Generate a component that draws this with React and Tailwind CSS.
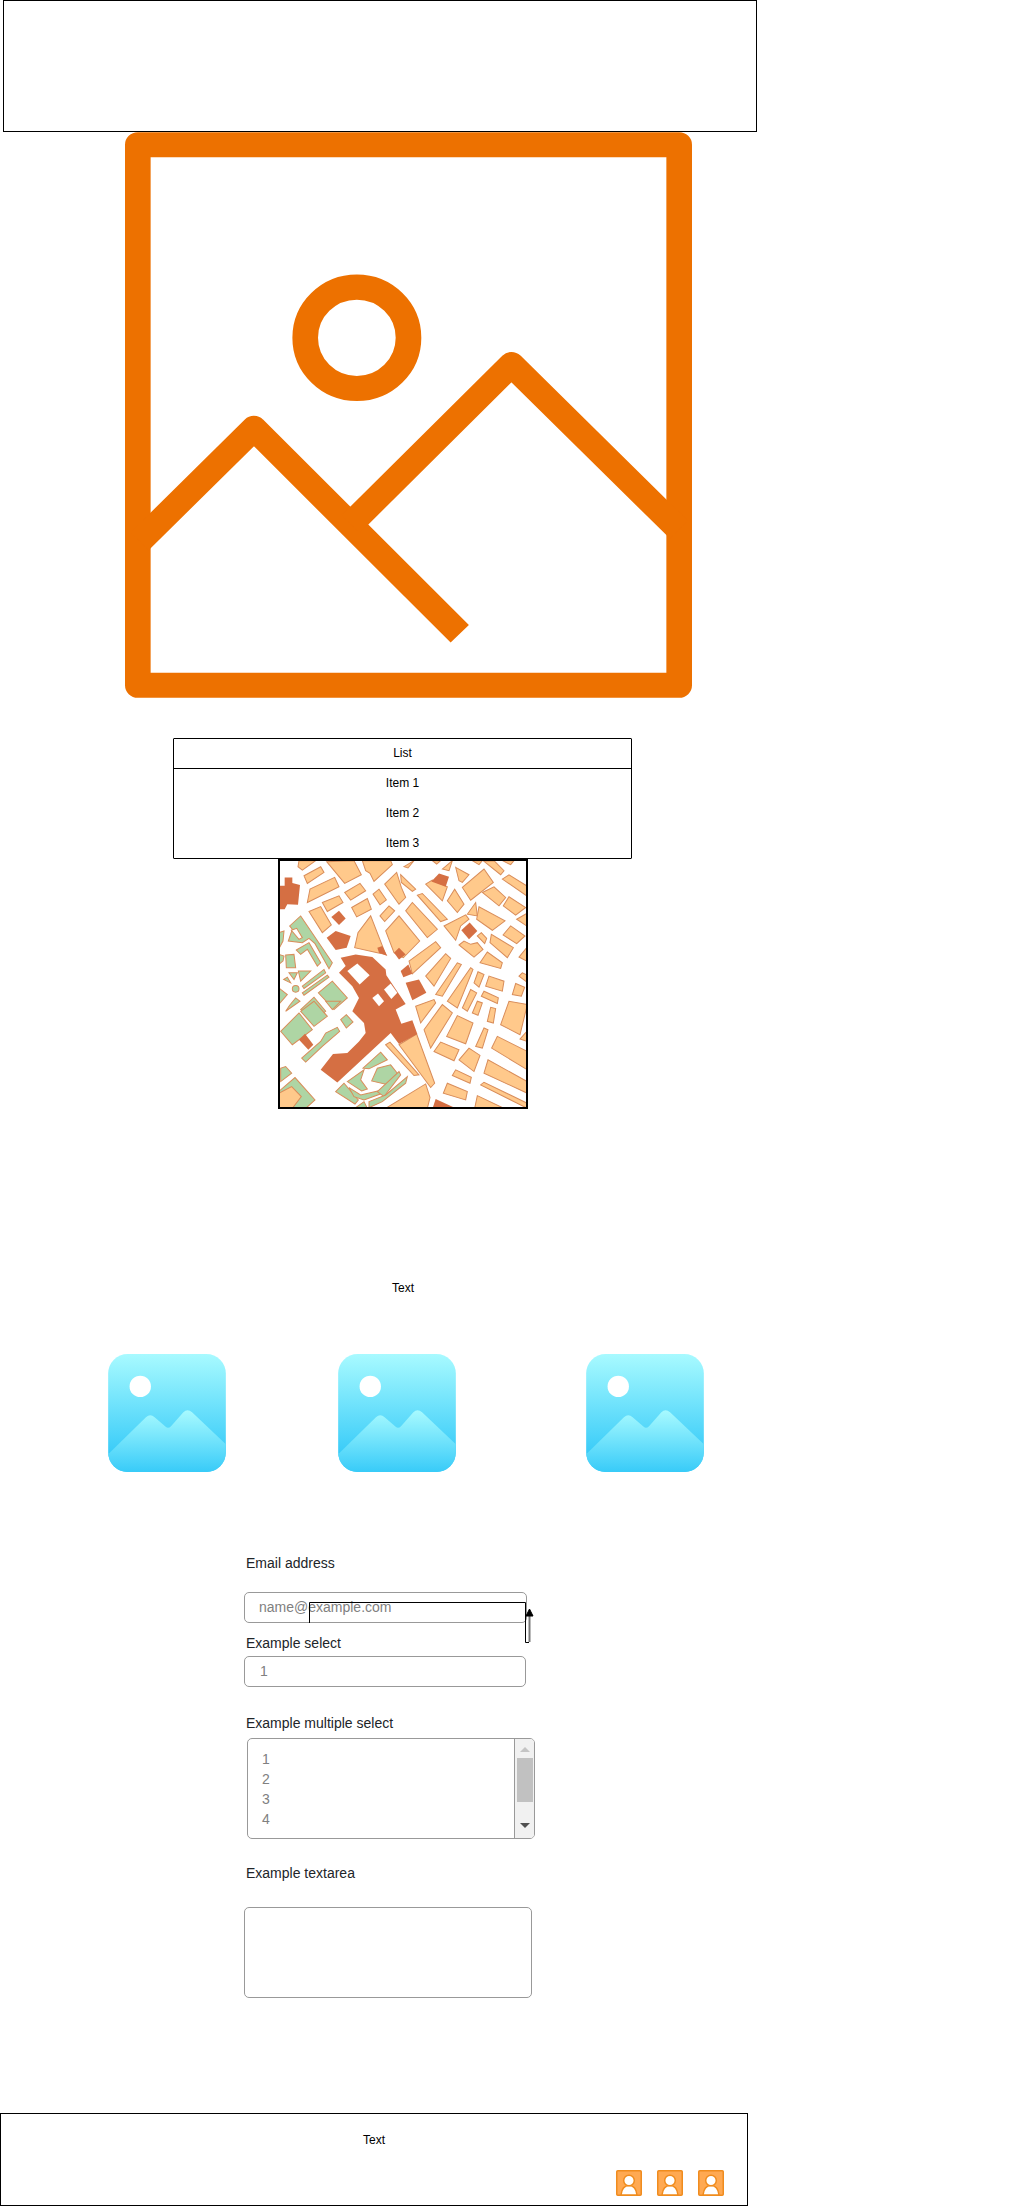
import React from 'react';

const MAP_LIGHT = [
  '85,30 135,30 95,58 82,48', '168,33 250,30 272,72 222,98', '275,30 360,30 365,42 310,92 298,68 285,60',
  '100,75 150,48 160,65 110,98', '110,155 118,115 192,80 205,108', '222,125 268,98 285,120 240,148',
  '155,155 205,135 217,155 170,182', '243,170 290,143 302,175 258,198', '115,182 150,167 182,222 155,245',
  '307,130 325,115 347,147 328,162', '328,195 355,165 372,180 342,212', '342,100 378,65 392,110 405,140 385,160',
  '390,72 435,115 425,122 392,95', '400,48 430,30 412,52', '405,180 425,155 500,235 470,260',
  '440,133 455,128 530,205 510,212', '465,100 485,88 530,108 515,150', '530,150 552,115 580,160 560,185',
  '555,50 595,72 575,95 565,90', '485,30 510,30 498,40', '515,55 545,30 535,60', '575,110 640,55 668,95 600,148',
  '640,32 670,30 700,60 690,72', '605,30 635,30 625,42', '695,30 730,30 720,42', '635,125 670,108 705,140 685,165',
  '698,165 715,138 765,170 735,193', '695,85 715,72 768,105 768,135', '738,205 768,188 768,225',
  '520,225 585,192 595,205 570,225 555,268', '590,190 615,155 620,195', '618,205 625,168 703,210 665,238',
  '697,252 720,225 763,255 738,278', '620,255 632,245 648,262 642,278', '658,275 662,250 728,290 710,320',
  '565,282 580,270 600,280 620,275 637,295 610,318', '628,335 650,303 695,335 690,352', '745,318 768,290 768,330',
  '252,290 262,245 300,195 345,310 320,305', '345,240 385,195 447,270 398,320 370,305', '415,330 495,272 510,290 425,368',
  '465,375 525,308 540,322 490,405', '495,430 560,335 572,340 515,435', '530,450 600,350 607,355 560,470',
  '610,395 622,362 640,370 625,408', '645,405 655,375 700,390 695,420', '575,470 600,415 618,425 590,480',
  '605,485 620,450 635,455 622,492', '632,435 640,420 683,440 680,457', '725,430 735,397 762,408 752,435',
  '745,375 755,365 770,372 768,392', '650,510 660,468 675,472 668,515', '435,465 490,445 495,455 450,515',
  '460,535 515,460 545,485 480,590', '528,555 560,493 607,515 585,577', '690,520 715,450 770,460 748,550',
  '748,563 770,538 770,570', '490,600 510,572 565,595 550,628', '565,625 595,590 628,612 610,660',
  '615,585 640,530 652,535 635,590', '663,590 680,555 770,600 770,655', '640,665 652,625 770,690 770,725',
  '630,700 640,692 770,755 770,770', '612,770 620,732 700,770', '545,672 555,655 602,677 598,695',
  '518,725 530,695 590,720 585,745', '345,770 465,697 478,738 470,770', '345,580 358,572 445,670 430,672',
  '385,580 438,548 492,695 480,708',
];

const MAP_GREEN = [
  // north-west gardens
  '53,270 65,235 57,225 90,195 185,335 175,353 133,278 115,262 95,275',
  '77,297 115,275 150,335 140,345 110,295 90,310',
  '45,312 70,310 75,350 47,350', '24,245 40,240 37,270 24,295', '24,310 40,315 37,330 24,340',
  '55,365 80,365 70,385', '83,360 120,360 90,390', '39,385 50,378 60,395',
  '95,405 160,355 165,365 100,412', '95,425 170,372 175,378 100,432',
  '143,425 185,390 230,440 190,475', '90,475 130,438 165,480 130,510',
  '24,410 50,430 24,460', '57,462 75,440 88,450 45,480',
  // west gardens
  '30,540 85,485 125,535 65,580', '90,480 130,450 170,495 130,525', '165,450 210,450 185,475',
  '210,505 227,490 247,512 227,530',
  '93,620 150,570 165,545 200,528 207,540 155,585 105,632',
  '30,650 45,645 63,665 30,690',
  '24,720 73,678 133,745 103,772 24,772',
  // south garden
  '277,650 330,602 350,625 295,652', '303,688 320,650 360,640 380,665 355,700',
  '195,720 220,695 263,745 253,757', '230,690 280,655 270,685 290,712 273,718',
  '235,708 270,730 335,715 335,725 280,745 250,735', '320,720 385,660 390,670 340,735',
  '295,750 345,730 410,675 405,695 335,750 295,768', '255,768 280,750 290,770',
];

const MAP_DARK = [
  '210,320 255,310 305,318 345,355 347,372 405,458 375,475 392,517 425,507 440,548 385,578 360,545 200,693 150,655 187,608 230,605 265,570 285,545 280,515 245,480 265,440 245,405 205,365 225,345',
  '24,105 42,105 42,80 65,80 65,97 88,103 82,162 50,160 42,175 24,175', '182,198 205,180 225,203 205,222',
  '168,260 195,240 240,255 228,290 195,297', '320,290 335,285 350,315 325,305', '370,305 385,290 405,310 385,325',
  '390,360 413,340 425,368 398,378', '405,395 445,385 467,425 425,447', '572,238 597,215 620,240 595,265',
  '85,565 103,547 128,580 113,595', '485,772 495,742 560,772', '482,92 505,68 535,78 525,108',
];

const MAP_HOLES = ['230,360 260,337 297,372 267,400', '340,415 360,397 380,425 362,443', '305,440 322,427 340,450 325,465'];

const CityMap = () => (
  <svg viewBox="28 31 738 735" className="block w-full h-full" preserveAspectRatio="none">
    <rect x="22" y="25" width="750" height="747" fill="#fff" />
    {MAP_LIGHT.map((p) => <polygon key={p} points={p} fill="#ffc98b" stroke="#d98d5a" strokeWidth="3" />)}
    {MAP_GREEN.map((p) => <polygon key={p} points={p} fill="#aed5a4" stroke="#d98d5a" strokeWidth="3" />)}
    <polygon points="62,238 78,232 95,260 85,265" fill="#fff" stroke="#d98d5a" strokeWidth="3" />
    <polygon points="24,725 63,705 92,735 65,770 24,770" fill="#ffc98b" stroke="#d98d5a" strokeWidth="3" />
    <circle cx="75" cy="413" r="10" fill="#aed5a4" stroke="#d98d5a" strokeWidth="3" />
    {MAP_DARK.map((p) => <polygon key={p} points={p} fill="#d56f43" />)}
    {MAP_HOLES.map((p) => <polygon key={p} points={p} fill="#fff" />)}
  </svg>
);

const BigImageIcon = () => (
  <svg viewBox="40 30 1482 1507" preserveAspectRatio="none" className="block w-full h-full" fill="none" stroke="#ed7100" strokeWidth="67">
    <rect x="73.5" y="64" width="1415" height="1439" strokeLinejoin="round" />
    <circle cx="646" cy="578" r="135" />
    <path d="M78 1120 L377 819 L915 1366" strokeLinejoin="round" />
    <path d="M630 1074 L1050 649 L1488 1089" strokeLinejoin="round" />
  </svg>
);

const BlueImage = ({ id }) => (
  <svg viewBox="55 72 352 353" className="block w-[118px] h-[118px]">
    <defs>
      <linearGradient id={`bg-${id}`} x1="0" y1="0" x2="0" y2="1">
        <stop offset="0" stopColor="#a8faff" />
        <stop offset="0.85" stopColor="#38cbf8" />
      </linearGradient>
      <linearGradient id={`hill-${id}`} gradientUnits="userSpaceOnUse" x1="0" y1="240" x2="0" y2="425">
        <stop offset="0" stopColor="#a8faff" />
        <stop offset="1" stopColor="#38cbf8" />
      </linearGradient>
      <clipPath id={`clip-${id}`}>
        <rect x="55" y="72" width="352" height="353" rx="58" />
      </clipPath>
    </defs>
    <rect x="55" y="72" width="352" height="353" rx="58" fill={`url(#bg-${id})`} />
    <circle cx="151" cy="169" r="32" fill="#fff" />
    <path
      clipPath={`url(#clip-${id})`}
      d="M55 372 L168 261 Q181 250 194 261 L227 290 Q235 296 243 288 L280 246 Q292 234 306 246 L407 342 V425 H55 Z"
      fill={`url(#hill-${id})`}
    />
  </svg>
);

const Avatar = () => (
  <svg viewBox="0 0 26 26" className="block w-[26px] h-[26px]">
    <rect x="0.75" y="0.75" width="24.5" height="24.5" rx="1" fill="#ffa952" stroke="#f08c1e" strokeWidth="1.5" />
    <path d="M5 25 Q6 15.5 13 15.5 Q20 15.5 21 25 Z" fill="#fff" stroke="#f08c1e" strokeWidth="1.5" />
    <circle cx="13" cy="10.5" r="5.3" fill="#fff" stroke="#f08c1e" strokeWidth="1.5" />
  </svg>
);

const FormLabel = ({ className, children }) => (
  <div className={`h-5 leading-5 text-sm text-[#212529] ${className}`}>{children}</div>
);

export default function App() {
  return (
    <div className="w-[1028px] h-[2206px] overflow-hidden bg-white text-black font-['Liberation_Sans',Arial,sans-serif]">
      <div className="ml-[3px] w-[754px] h-[132px] border border-black" />

      <div className="ml-[125px] w-[567px] h-[566px]">
        <BigImageIcon />
      </div>

      {/* List */}
      <div className="mt-[40px] ml-[173px] w-[459px] h-[121px] border border-black rounded-[1px] text-xs text-center">
        <div className="h-[30px] leading-[29px] border-b border-black">List</div>
        <div className="h-[30px] leading-[29px]">Item 1</div>
        <div className="h-[30px] leading-[29px]">Item 2</div>
        <div className="h-[29px] leading-[29px]">Item 3</div>
      </div>

      <div className="ml-[278px] w-[250px] h-[250px] border-2 border-black overflow-hidden">
        <CityMap />
      </div>

      <div className="mt-[170px] ml-[278px] w-[250px] h-[18px] leading-[18px] text-xs text-center">Text</div>

      <div className="mt-[57px] ml-[108px] flex">
        <BlueImage id="a" />
        <div className="ml-[112px]"><BlueImage id="b" /></div>
        <div className="ml-[130px]"><BlueImage id="c" /></div>
      </div>

      {/* Form */}
      <div className="ml-[244px]">
        <FormLabel className="mt-[81px] ml-[2px]">Email address</FormLabel>
        <div className="relative mt-[19px] w-[283px] h-[31px]">
          <input
            readOnly
            placeholder="name@example.com"
            className="w-full h-full border border-[#999] rounded-[5px] pl-[14px] pb-[2px] text-sm bg-transparent placeholder:text-[#808080] outline-none"
          />
          <svg viewBox="0 0 226 42" className="absolute left-[65px] top-[10px] w-[226px] h-[42px]" fill="none">
            <path d="M0.5 21 V0.5 H216.5 V40.5 H220" stroke="#000" strokeWidth="1" />
            <path d="M220.5 14 V40" stroke="#777" strokeWidth="2" />
            <path d="M220.5 7 L224 14 H217 Z" fill="#000" stroke="#000" strokeWidth="1" />
          </svg>
        </div>
        <FormLabel className="mt-[10px] ml-[2px]">Example select</FormLabel>
        <div className="mt-[3px] w-[282px] h-[31px] border border-[#999] rounded-[5px] pl-[15px] leading-[29px] text-sm text-[#808080]">1</div>

        <FormLabel className="mt-[26px] ml-[2px]">Example multiple select</FormLabel>
        <div className="mt-[5px] ml-[3px] w-[288px] h-[101px] border border-[#999] rounded-[5px] overflow-hidden flex text-sm text-[#808080]">
          <div className="flex-1 pl-[14px] pt-[10px] leading-[20px]">
            <div>1</div>
            <div>2</div>
            <div>3</div>
            <div>4</div>
          </div>
          <div className="w-[20px] border-l border-[#999] bg-[#f1f1f1] flex flex-col items-center">
            <svg viewBox="0 0 10 5" className="mt-[8px] w-[10px] h-[5px]"><path d="M0 5 L5 0 L10 5 Z" fill="#c4c4c4" /></svg>
            <div className="mt-[6px] w-[16px] h-[44px] bg-[#c1c1c1]" />
            <svg viewBox="0 0 10 5" className="mt-[21px] w-[10px] h-[5px]"><path d="M0 0 L10 0 L5 5 Z" fill="#505050" /></svg>
          </div>
        </div>

        <FormLabel className="mt-[24px] ml-[2px]">Example textarea</FormLabel>
        <div className="mt-[24px] w-[288px] h-[91px] border border-[#999] rounded-[5px]" />
      </div>

      {/* Footer */}
      <div className="mt-[115px] w-[748px] h-[93px] border border-black pt-[17px]">
        <div className="h-[18px] leading-[18px] text-xs text-center">Text</div>
        <div className="mt-[21px] pr-[23px] flex justify-end gap-[15px]">
          <Avatar />
          <Avatar />
          <Avatar />
        </div>
      </div>
    </div>
  );
}
